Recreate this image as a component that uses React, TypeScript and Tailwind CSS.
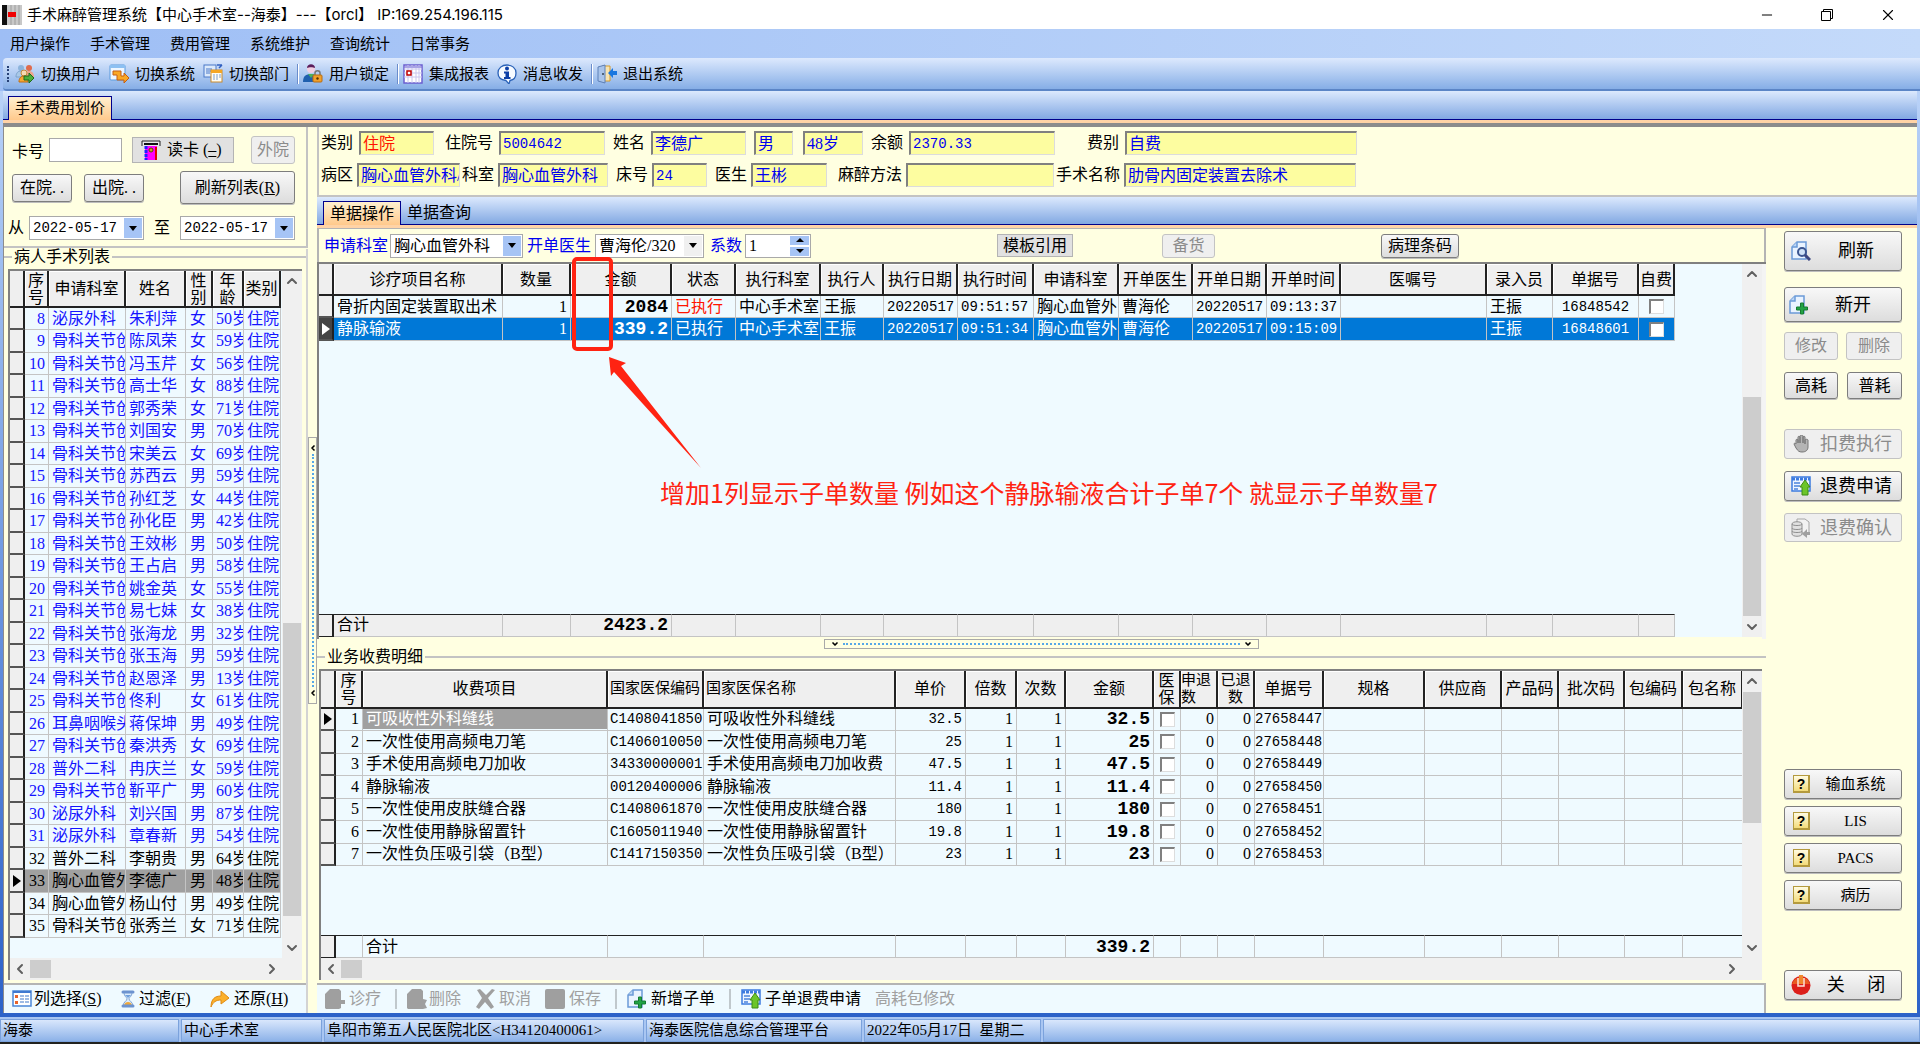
import type { ReactNode } from "react"
import clsx from "clsx"
import { ChevronDown, ChevronLeft, ChevronRight, ChevronUp, Minus, X } from "lucide-react"

const MONO = "font-['Liberation_Mono',monospace] text-[14px]"
const AMOUNT = "text-right font-['Liberation_Mono',monospace] text-[18px] font-bold"

/* ---------- icons ---------- */

const UsersIcon = () => (
  <svg className="h-5 w-5 shrink-0" viewBox="0 0 20 20">
    <circle cx="6" cy="4" r="3" fill="#8db4dc" />
    <path d="M1 13c0-4 2-6 5-6s5 2 5 6z" fill="#a9c9e8" stroke="#7da3cc" />
    <circle cx="14" cy="4" r="3" fill="#e06b4c" />
    <path d="M9 13c0-4 2-6 5-6s5 2 5 6z" fill="#eda58c" />
    <circle cx="9" cy="9" r="3" fill="#f6d9b4" stroke="#c58a3a" />
    <path d="M4 18c0-4 2-6 5-6s4 2 4 6z" fill="#f7a733" stroke="#c06d10" />
    <path d="M9 12h5V9l5 5-5 5v-3H9z" fill="#4caf3c" stroke="#1f6b1a" />
  </svg>
)

const SystemIcon = () => (
  <svg className="h-5 w-5 shrink-0" viewBox="0 0 20 20">
    <rect x="1" y="1" width="15" height="15" rx="1" fill="#eef6ff" stroke="#5a9bdc" />
    <rect x="1" y="1" width="15" height="3" fill="#8cc0f2" />
    <path d="M4 7h8v5h3v-3l5 5-5 5v-3H8v-5H4z" fill="#f9a825" stroke="#c55f12" />
  </svg>
)

const DeptIcon = () => (
  <svg className="h-5 w-5 shrink-0" viewBox="0 0 20 20">
    <rect x="1" y="1" width="12" height="12" fill="#dbe9fb" stroke="#4a78c8" />
    <path d="M3 5h6M3 7h5M3 9h4" stroke="#4a78c8" />
    <path d="M14 1h5M16 4l3-3" stroke="#2f5fc0" strokeWidth="1.5" />
    <rect x="8" y="6" width="11" height="12" fill="#fffdf4" stroke="#c98a2c" />
    <rect x="8" y="6" width="11" height="3" fill="#f5a623" />
    <path d="M10 11h2M13 11h2M16 11h2M10 13h2M13 13h2M16 13h2M10 15h2M13 15h2" stroke="#7f9fcc" />
  </svg>
)

const LockUserIcon = () => (
  <svg className="h-5 w-5 shrink-0" viewBox="0 0 20 20">
    <circle cx="8" cy="5" r="4" fill="#f1cfe2" />
    <path d="M4 4c0-5 8-5 8 0-2-1-6-1-8 0z" fill="#5a1d5c" />
    <path d="M0 18c0-6 3-8 8-8s6 2 6 8z" fill="#1f5fae" />
    <path d="M5 10l3 4 3-4z" fill="#4cb05a" />
    <path d="M12 12V9c0-3 5-3 5 0v3" fill="none" stroke="#777" strokeWidth="1.5" />
    <rect x="10" y="11" width="9" height="7" rx="1" fill="#f0a02c" stroke="#b86d10" />
    <circle cx="14.500" cy="14.500" r="1.200" fill="#5a3300" />
  </svg>
)

const ReportIcon = () => (
  <svg className="h-5 w-5 shrink-0" viewBox="0 0 20 20">
    <rect x="1" y="1" width="18" height="18" fill="#fff" stroke="#6b5fd0" strokeWidth="1.500" />
    <path d="M1 5h18M1 9h18M1 13h18M5 1v18M9 1v18M13 1v18M16 1v18" stroke="#c9c6ee" />
    <path d="M2 2h16v2H2z" fill="#a9a4e6" />
    <rect x="4" y="7" width="4" height="4" fill="#fff" stroke="#c00000" strokeWidth="1.500" />
  </svg>
)

const InfoIcon = () => (
  <svg className="h-5 w-5 shrink-0" viewBox="0 0 20 20">
    <path d="M10 1c5 0 9 3 9 8s-3 7-6 7.500L12 20l-3-3.500C5 16 1 14 1 9s4-8 9-8z" fill="#f6faff" stroke="#2a62b8" strokeWidth="1.300" />
    <circle cx="10" cy="4.500" r="2" fill="#0d3fa6" />
    <path d="M7 7.500H12v5.500H13.500v2H7v-2H8.500V9.500H7z" fill="#0d3fa6" />
  </svg>
)

const ExitIcon = () => (
  <svg className="h-5 w-5 shrink-0" viewBox="0 0 20 20">
    <path d="M5 2h8v15H5z" fill="#f7e4b2" stroke="#d39a2c" />
    <path d="M1 3l7-2v18l-7-2z" fill="#a9c4ea" stroke="#5d80b8" />
    <circle cx="6" cy="10" r="1" fill="#345" />
    <path d="M20 7h-4V4l-5 5 5 5v-3h4z" fill="#1976e0" />
  </svg>
)

const CardIcon = () => (
  <svg className="h-5 w-5 shrink-0" viewBox="0 0 20 20">
    <path d="M1 6V1h18v5" fill="#e8e8e8" stroke="#222" />
    <path d="M3 4h14" stroke="#111" strokeWidth="2" />
    <rect x="4" y="6" width="12" height="14" fill="#ff00ff" />
    <path d="M5 6v14" stroke="#2020ff" strokeWidth="3" strokeDasharray="3 1" />
    <path d="M15 7v13" stroke="#e00000" strokeWidth="2" />
    <circle cx="10" cy="10" r="2" fill="#c8a020" stroke="#5a4a00" />
  </svg>
)

const ColumnsIcon = () => (
  <svg className="h-[18px] w-5 shrink-0" viewBox="0 0 20 18">
    <rect x="1" y="1" width="18" height="15" fill="#fff" stroke="#4a86d8" strokeWidth="1.500" />
    <path d="M1 2h18" stroke="#3f79d0" strokeWidth="2" />
    <rect x="3" y="5" width="3" height="3" fill="#e8622a" />
    <rect x="3" y="11" width="3" height="3" fill="#e8622a" />
    <path d="M8 6h4M13 6h4M8 9h4M13 9h4M8 12h4M13 12h4" stroke="#7fa5dc" strokeWidth="1.500" />
  </svg>
)

const HourglassIcon = () => (
  <svg className="h-[18px] w-[14px] shrink-0" viewBox="0 0 14 18">
    <path d="M3 2C3 7 6 7 6 9s-4 3-4 7h10c0-4-4-5-4-7s3-2 3-7z" fill="#dcecfb" stroke="#7fa3d4" />
    <path d="M3 15c1-4 7-4 8 0z" fill="#f0a83a" />
    <path d="M4 5h6L7 8z" fill="#6f9fdc" />
    <path d="M2 2h10M2 16h10" stroke="#6d93cf" strokeWidth="3" strokeLinecap="round" />
  </svg>
)

const RedoIcon = () => (
  <svg className="h-[18px] w-5 shrink-0" viewBox="0 0 20 18">
    <path d="M1 17C1 9 5 6 11 6V1l8 7-8 6v-4c-5 0-8 2-10 7z" fill="#fbb02c" stroke="#e08a12" />
  </svg>
)

const PageIcon = ({ mark }: { mark: "search" | "plus" }) => (
  <svg className="h-5 w-5 shrink-0" viewBox="0 0 20 20">
    <path d="M6 1h9v17H1V6z" fill="#e9f3ff" stroke="#6b9ad8" strokeWidth="1.500" />
    <path d="M6 1v5H1" fill="#bcd6f5" stroke="#6b9ad8" strokeWidth="1.500" />
    {mark === "search" ? (
      <>
        <circle cx="11" cy="11" r="4" fill="#cfe2f7" stroke="#3b5590" strokeWidth="2" />
        <path d="M14 14l5 5" stroke="#3b4780" strokeWidth="3" />
      </>
    ) : (
      <path d="M11.500 8h3v4h4v3h-4v4h-3v-4h-4v-3h4z" fill="#22a344" stroke="#157a30" />
    )}
  </svg>
)

const RefundIcon = () => (
  <svg className="h-5 w-5 shrink-0" viewBox="0 0 20 20">
    <rect x="1" y="1" width="18" height="14" fill="#eef5ff" stroke="#3c7be0" strokeWidth="1.500" />
    <path d="M1 3h18" stroke="#3c7be0" strokeWidth="3" strokeDasharray="3 1" />
    <path d="M3 7h6M3 10h6M3 13h4" stroke="#4b83dc" strokeWidth="1.500" />
    <path d="M14 4l5 7h-2v8h-6v-8H9z" fill="#6cc52a" stroke="#3d8c14" />
  </svg>
)

const HandIcon = () => (
  <svg className="h-[18px] w-[18px] shrink-0" viewBox="0 0 18 18">
    <path d="M3 9V5c0-1 2-1 2 0v3V2c0-1 2-1 2 0v6V1c0-1 3-1 3 0v7V2c0-1 2-1 2 0v7V5c0-1 3-1 3 0v7c0 3-2 5-6 5-3 0-4-1-6-4L1 9c0-1 1-1 2 0z" fill="#b4b4b4" stroke="#777" />
  </svg>
)

const ConfirmIcon = () => (
  <svg className="h-5 w-5 shrink-0" viewBox="0 0 20 20">
    <path d="M6 1h8l4 3v11H6z" fill="#f2f2f2" stroke="#a5a5a5" />
    <path d="M1 6c0-3 10-3 10 0v10c0 3-10 3-10 0z" fill="#e0e0e0" stroke="#8f8f8f" />
    <path d="M1 6c0 2 10 2 10 0M1 10c0 2 10 2 10 0M1 13c0 2 10 2 10 0" fill="none" stroke="#8f8f8f" />
    <path d="M19 14h-3v-3l-5 5 5 4v-3h3z" fill="#a0a0a0" />
  </svg>
)

const HelpIcon = () => (
  <span className="flex h-[18px] w-[17px] shrink-0 items-center justify-center border border-r-2 border-b-2 border-[#b49a3e] bg-linear-to-b from-[#fffbe0] to-[#f3dc7a] font-['Liberation_Sans',sans-serif] text-[14px] leading-none font-bold text-black">
    ?
  </span>
)

const PowerIcon = () => (
  <svg className="h-5 w-5 shrink-0" viewBox="0 0 20 20">
    <circle cx="10" cy="10.500" r="9.500" fill="#dc1f1a" />
    <path d="M1 9a9.500 9.500 0 0 1 18 0z" fill="#e95a22" />
    <path d="M7 3v8h6V3" fill="none" stroke="#fbe3d8" strokeWidth="1.500" />
    <path d="M8 0h4v9H8z" fill="#f0862c" />
  </svg>
)

const GrayPage = ({ kind }: { kind: "plus" | "x" | "cross" | "save" }) => (
  <svg className="h-5 w-5 shrink-0" viewBox="0 0 20 20" fill="#9f9f9f">
    {kind === "save" && <rect width="20" height="20" rx="2" />}
    {kind === "cross" && <path d="M2 1l3-1 6 6 6-6 3 1-7 8 6 9-3 2-6-7-6 7-3-2 6-9z" />}
    {kind === "plus" && <path d="M5 0h9l2 2v9h4v4h-4v4l-2 1H1l-1-1V5z" />}
    {kind === "x" && <path d="M5 0h9l2 2v8l4 1-2 4 2 4-4 1H1l-1-1V5z" />}
  </svg>
)

/* ---------- small controls ---------- */

interface ButtonProps {
  children: ReactNode
  icon?: ReactNode
  className?: string
  disabled?: boolean
}

const Button = ({ children, icon, className, disabled }: ButtonProps) => (
  <button
    type="button"
    disabled={disabled}
    className={clsx(
      "flex shrink-0 items-center rounded-[3px] border leading-none whitespace-nowrap",
      disabled
        ? "border-[#c3c3c3] bg-[#efefef] text-[#8b8b8b]"
        : "border-[#7d7d7d] bg-linear-to-b from-[#f8f8f8] to-[#dddddd] text-black shadow-[0_1px_0_#bdbdbd]",
      className
    )}
  >
    {icon}
    <span className="flex-1 text-center">{children}</span>
  </button>
)

interface FieldProps {
  label?: string
  name: string
  value: string
  className: string
  gap?: string
  red?: boolean
  mono?: boolean
}

const Field = ({ label, name, value, className, gap, red, mono }: FieldProps) => (
  <label className={clsx("flex shrink-0 items-center whitespace-nowrap", gap)}>
    {label}
    <input
      readOnly
      aria-label={label ?? name}
      value={value}
      className={clsx(
        "h-6 border-t-2 border-r border-b border-l-2 border-t-[#808080] border-r-[#dcdcdc] border-b-[#dcdcdc] border-l-[#808080] bg-[#fdfda0] pl-0.5 outline-none",
        red ? "text-[#ff1400]" : "text-[#0000f0]",
        mono && MONO,
        className
      )}
    />
  </label>
)

interface ComboProps {
  name: string
  value: string
  className: string
  plain?: boolean
  mono?: boolean
}

const Combo = ({ name, value, className, plain, mono }: ComboProps) => (
  <span className={clsx("flex h-6 shrink-0 border border-[#a9a9a9] bg-white p-px", className)}>
    <select
      aria-label={name}
      className={clsx("min-w-0 flex-1 appearance-none bg-white pl-0.5 leading-none text-black outline-none", mono && MONO)}
    >
      <option>{value}</option>
    </select>
    <span
      className={clsx(
        "pointer-events-none flex w-[18px] shrink-0 items-center justify-center",
        plain ? "bg-[#f0f0f0]" : "bg-[#a6c4f5]"
      )}
    >
      <span className="border-x-4 border-t-5 border-x-transparent border-t-black" />
    </span>
  </span>
)

const VScroll = ({ before, thumb, after }: { before: number; thumb: number; after: number }) => (
  <div className="flex w-5 shrink-0 flex-col items-center bg-[#f0f0f0] text-[#606060]">
    <ChevronUp className="h-5 w-4 shrink-0" strokeWidth={3} />
    <div style={{ flexGrow: before }} />
    <div className="w-[18px] bg-[#cdcdcd]" style={{ flexGrow: thumb }} />
    <div style={{ flexGrow: after }} />
    <ChevronDown className="h-5 w-4 shrink-0" strokeWidth={3} />
  </div>
)

const HScroll = () => (
  <div className="flex h-[22px] shrink-0 items-center bg-[#f0f0f0] pr-5 text-[#606060]">
    <ChevronLeft className="h-4 w-5" strokeWidth={3} />
    <div className="h-[18px] w-[21px] bg-[#cdcdcd]" />
    <div className="flex-1" />
    <ChevronRight className="h-4 w-5" strokeWidth={3} />
  </div>
)

const GroupTitle = ({ children }: { children: ReactNode }) => (
  <div className="flex h-4 shrink-0 items-center leading-none">
    <span className="w-2 border-t-2 border-[#c3c3c3]" />
    <h2 className="px-0.5">{children}</h2>
    <span className="flex-1 border-t-2 border-[#c3c3c3]" />
  </div>
)

const TabStrip = ({ tabs, className }: { tabs: string[]; className?: string }) => (
  <>
    <div
      role="tablist"
      className={clsx(
        "flex shrink-0 items-end border-b border-[#00008b] bg-linear-to-b from-[#dce9fd] to-[#82a8e2] leading-none",
        className
      )}
    >
      {tabs.map((tab, i) => (
        <button
          key={tab}
          type="button"
          role="tab"
          aria-selected={i === 0}
          className={clsx(
            "-mb-px h-6 px-1.5",
            i === 0 && "border border-b-0 border-[#00008b] bg-linear-to-b from-[#fff0cf] to-[#ffc98c]"
          )}
        >
          {tab}
        </button>
      ))}
    </div>
    <div className="h-[3px] shrink-0 bg-[#ffd3a6]" />
  </>
)

/* ---------- data grid ---------- */

interface Column {
  title: string
  width: string
  cell?: string
  head?: string
}

interface GridProps {
  columns: Column[]
  rows: ReactNode[][]
  rowClass?: (index: number) => string
  current: number
  headHeight: string
  inverted?: boolean
  footer?: Record<number, ReactNode>
  footerClass?: string
}

const Grid = ({ columns, rows, rowClass, current, headHeight, inverted, footer, footerClass }: GridProps) => (
  <div className="flex min-w-0 flex-1 flex-col justify-between overflow-hidden bg-[#effaff]">
    <table className="w-px table-fixed border-separate border-spacing-0 leading-[17px] whitespace-nowrap">
      <thead>
        <tr className={headHeight}>
          <th className="w-[15px] border-r-2 border-b-2 border-[#222] bg-[#efefef]" aria-label="当前行" />
          {columns.map((c) => (
            <th
              key={c.title}
              className={clsx(
                "overflow-hidden border-r-2 border-b-2 border-[#222] bg-[#efefef] p-0 font-normal shadow-[inset_1px_1px_0_#fff]",
                c.width,
                c.head
              )}
            >
              {c.title}
            </th>
          ))}
        </tr>
      </thead>
      <tbody>
        {rows.map((row, r) => (
          <tr key={r} className={clsx("h-[22px] even:h-[23px]", rowClass?.(r))}>
            <td
              className={clsx(
                "border-r-2 border-b-2 border-r-[#222] border-b-[#555] p-0",
                inverted && r === current ? "bg-[#444]" : "bg-[#efefef]"
              )}
            >
              {r === current && (
                <span
                  className={clsx(
                    "mx-auto block w-2 border-y-6 border-l-8 border-y-transparent",
                    inverted ? "border-l-white" : "border-l-black"
                  )}
                />
              )}
            </td>
            {row.map((cell, i) => (
              <td
                key={i}
                className={clsx("overflow-hidden border-r border-b border-[#c4c4c4] px-[3px] py-0 leading-5", columns[i].cell)}
              >
                {cell}
              </td>
            ))}
          </tr>
        ))}
      </tbody>
    </table>
    {footer && (
      <table className="w-px table-fixed border-separate border-spacing-0 leading-5 whitespace-nowrap">
        <tbody>
          <tr className="h-[23px]">
            <td className="w-[15px] border-t border-r-2 border-b border-[#222] bg-[#efefef]" />
            {columns.map((c, i) => (
              <td
                key={c.title}
                className={clsx(
                  "overflow-hidden border-t border-r border-b border-t-[#222] border-r-[#c4c4c4] border-b-[#c4c4c4] px-[3px] py-0",
                  c.width,
                  c.cell,
                  footerClass
                )}
              >
                {footer[i]}
              </td>
            ))}
          </tr>
        </tbody>
      </table>
    )}
  </div>
)

const Check = ({ label }: { label: string }) => (
  <input
    type="checkbox"
    aria-label={label}
    className="mx-auto block h-[15px] w-[15px] appearance-none border-t-2 border-r border-b border-l-2 border-t-[#808080] border-r-[#ddd] border-b-[#ddd] border-l-[#808080] bg-white"
  />
)

/* ---------- data ---------- */

const MENU = ["用户操作", "手术管理", "费用管理", "系统维护", "查询统计", "日常事务"]

const PATIENTS = [
  "泌尿外科,朱利萍,女,50", "骨科关节创,陈凤荣,女,59", "骨科关节创,冯玉芹,女,56", "骨科关节创,高士华,女,88",
  "骨科关节创,郭秀荣,女,71", "骨科关节创,刘国安,男,70", "骨科关节创,宋美云,女,69", "骨科关节创,苏西云,男,59",
  "骨科关节创,孙红芝,女,44", "骨科关节创,孙化臣,男,42", "骨科关节创,王效彬,男,50", "骨科关节创,王占启,男,58",
  "骨科关节创,姚金英,女,55", "骨科关节创,易七妹,女,38", "骨科关节创,张海龙,男,32", "骨科关节创,张玉海,男,59",
  "骨科关节创,赵恩泽,男,13", "骨科关节创,佟利,女,61", "耳鼻咽喉头,蒋保坤,男,49", "骨科关节创,秦洪秀,女,69",
  "普外二科,冉庆兰,女,59", "骨科关节创,靳平广,男,60", "泌尿外科,刘兴国,男,87", "泌尿外科,章春新,男,54",
  "普外二科,李朝贵,男,64", "胸心血管外,李德广,男,48", "胸心血管外,杨山付,男,49", "骨科关节创,张秀兰,女,71",
].map((line, i) => {
  const [dept, name, sex, age] = line.split(",")
  return [i + 8, dept, name, sex, age + "岁", "住院"]
})

const PATIENT_COLUMNS: Column[] = [
  { title: "序号", width: "w-6", cell: "text-right", head: "whitespace-normal px-0.5" },
  { title: "申请科室", width: "w-[77px]" },
  { title: "姓名", width: "w-[60px]" },
  { title: "性别", width: "w-[27px]", cell: "pl-1", head: "whitespace-normal px-1" },
  { title: "年龄", width: "w-[31px]", head: "whitespace-normal px-1" },
  { title: "类别", width: "w-[37px]" },
]

const ORDER_COLUMNS: Column[] = [
  { title: "诊疗项目名称", width: "w-[169px]" },
  { title: "数量", width: "w-[68px]", cell: "text-right" },
  { title: "金额", width: "w-[101px]", cell: AMOUNT },
  { title: "状态", width: "w-16" },
  { title: "执行科室", width: "w-[85px]" },
  { title: "执行人", width: "w-[63px]" },
  { title: "执行日期", width: "w-[74px]", cell: MONO },
  { title: "执行时间", width: "w-[76px]", cell: MONO },
  { title: "申请科室", width: "w-[85px]" },
  { title: "开单医生", width: "w-[74px]" },
  { title: "开单日期", width: "w-[74px]", cell: MONO },
  { title: "开单时间", width: "w-[74px]", cell: MONO },
  { title: "医嘱号", width: "w-[146px]" },
  { title: "录入员", width: "w-[66px]" },
  { title: "单据号", width: "w-[86px]", cell: clsx(MONO, "text-center") },
  { title: "自费", width: "w-9" },
]

const ORDERS: ReactNode[][] = [
  ["骨折内固定装置取出术", 1, "2084", <span className="text-[#ff1400]">已执行</span>, "中心手术室", "王振", "20220517", "09:51:57", "胸心血管外", "曹海伦", "20220517", "09:13:37", "", "王振", "16848542", <Check label="自费" />],
  ["静脉输液", 1, "339.2", "已执行", "中心手术室", "王振", "20220517", "09:51:34", "胸心血管外", "曹海伦", "20220517", "09:15:09", "", "王振", "16848601", <Check label="自费" />],
]

const CHARGE_COLUMNS: Column[] = [
  { title: "序号", width: "w-[27px]", cell: "text-right", head: "whitespace-normal px-1" },
  { title: "收费项目", width: "w-[245px]" },
  { title: "国家医保编码", width: "w-24", cell: MONO, head: "text-[15px]" },
  { title: "国家医保名称", width: "w-48", head: "pl-0.5 text-left text-[15px]" },
  { title: "单价", width: "w-[70px]", cell: clsx(MONO, "text-right") },
  { title: "倍数", width: "w-[51px]", cell: "text-right" },
  { title: "次数", width: "w-[49px]", cell: "text-right" },
  { title: "金额", width: "w-[88px]", cell: AMOUNT },
  { title: "医保", width: "w-[27px]", head: "whitespace-normal px-1" },
  { title: "申退数", width: "w-[37px]", cell: "text-right", head: "whitespace-normal text-left text-[15px]" },
  { title: "已退数", width: "w-[37px]", cell: "text-right", head: "whitespace-normal text-[15px]" },
  { title: "单据号", width: "w-[69px]", cell: MONO },
  { title: "规格", width: "w-[101px]" },
  { title: "供应商", width: "w-[77px]" },
  { title: "产品码", width: "w-[57px]" },
  { title: "批次码", width: "w-[66px]" },
  { title: "包编码", width: "w-[58px]" },
  { title: "包名称", width: "w-[60px]" },
]

const CHARGES: ReactNode[][] = [
  ["可吸收性外科缝线", "C1408041850", "可吸收性外科缝线", "32.5"],
  ["一次性使用高频电刀笔", "C1406010050", "一次性使用高频电刀笔", "25"],
  ["手术使用高频电刀加收", "34330000001", "手术使用高频电刀加收费", "47.5"],
  ["静脉输液", "00120400006", "静脉输液", "11.4"],
  ["一次性使用皮肤缝合器", "C1408061870", "一次性使用皮肤缝合器", "180"],
  ["一次性使用静脉留置针", "C1605011940", "一次性使用静脉留置针", "19.8"],
  ["一次性负压吸引袋（B型）", "C1417150350", "一次性负压吸引袋（B型）", "23"],
].map(([item, code, name, price], i) => [
  i + 1,
  i === 0 ? <span className="-mx-[3px] block bg-[#a0a0a0] px-[3px] text-white">{item}</span> : item,
  <span className="-mx-px block">{code}</span>,
  name, price, 1, 1, price, <Check label="医保" />, 0, 0,
  <span className="-mx-[3px] block">{27658447 + i}</span>,
  "", "", "", "", "", "",
])

/* ---------- sections ---------- */

const Header = () => (
  <header className="shrink-0 font-['Inter','Noto_Sans_CJK_SC',sans-serif] text-[15px] leading-none">
    <div className="flex h-[29px] items-center bg-white px-0.5">
      <svg className="mr-[5px] h-5 w-5 shrink-0" viewBox="0 0 20 20">
        <rect width="20" height="20" fill="#c8c8c8" />
        <rect width="5" height="20" fill="#111" />
        <path d="M9 0v20M13 0v20M17 0v20" stroke="#9c9c9c" />
        <path d="M6 7h8v5H6z" fill="#f00000" />
      </svg>
      <h1 className="flex-1 whitespace-nowrap">手术麻醉管理系统【中心手术室--海泰】---【orcl】 IP:169.254.196.115</h1>
      <div className="flex gap-[45px] pr-[21px]">
        <button type="button" aria-label="最小化"><Minus className="h-4 w-4" strokeWidth={1.5} /></button>
        <button type="button" aria-label="还原">
          <svg className="h-[14px] w-[14px]" viewBox="0 0 14 14" fill="none" stroke="#000">
            <path d="M1.500 3.500h9v9h-9zM3.500 3.500v-2h9v9h-2" />
          </svg>
        </button>
        <button type="button" aria-label="关闭窗口"><X className="h-[18px] w-[18px]" strokeWidth={1.5} /></button>
      </div>
    </div>
    <nav className="flex h-[29px] items-center gap-5 bg-linear-to-r from-[#9ebef5] to-[#c4dafa] px-2.5">
      {MENU.map((item) => (
        <button key={item} type="button">{item}</button>
      ))}
    </nav>
    <div className="bg-linear-to-r from-[#9ebef5] to-[#c4dafa] pl-[3px]">
      <div className="flex h-[33px] items-center rounded-l border-b-2 border-[#5b85c6] bg-linear-to-b from-[#dde9fd] to-[#86aee6] pl-1 whitespace-nowrap">
        <span className="mr-1.5 h-4 border-l-2 border-dotted border-[#274176]" />
        <ToolItem icon={<UsersIcon />}>切换用户</ToolItem>
        <ToolItem icon={<SystemIcon />}>切换系统</ToolItem>
        <ToolItem icon={<DeptIcon />}>切换部门</ToolItem>
        <Divider />
        <ToolItem icon={<LockUserIcon />}>用户锁定</ToolItem>
        <Divider />
        <ToolItem icon={<ReportIcon />}>集成报表</ToolItem>
        <ToolItem icon={<InfoIcon />}>消息收发</ToolItem>
        <Divider />
        <ToolItem icon={<ExitIcon />}>退出系统</ToolItem>
      </div>
    </div>
  </header>
)

const ToolItem = ({ icon, children }: { icon: ReactNode; children: ReactNode }) => (
  <button type="button" className="mr-2 flex items-center gap-1.5">
    {icon}
    {children}
  </button>
)

const Divider = () => <span className="mr-1 h-5 border-r border-l border-l-[#6a8ccb] border-r-white" />

const PatientPanel = () => (
  <aside className="flex w-[304px] shrink-0 flex-col bg-[#ffffe1]">
    <div className="shrink-0 border-r-2 border-b-2 border-[#c3c3c3] pt-2 pr-[11px] pb-1.5">
      <div className="flex h-[30px] items-center pl-2">
        <label htmlFor="card" className="w-[37px] pt-1">卡号</label>
        <input id="card" className="h-6 w-[73px] border border-[#a9a9a9] bg-white px-1 outline-none" />
        <button type="button" className="ml-2.5 flex h-[26px] w-[102px] items-center gap-1.5 border border-[#b4b4b4] bg-[#e1e1e1] pl-2 leading-none">
          <CardIcon />
          <span>读卡 (<u>–</u>)</span>
        </button>
        <Button disabled className="ml-auto h-7 w-11">外院</Button>
      </div>
      <div className="mt-1.5 flex h-[33px] items-center pl-2">
        <Button className="h-7 w-[60px]">在院. .</Button>
        <Button className="ml-3 h-7 w-[60px]">出院. .</Button>
        <Button className="ml-auto h-[33px] w-[115px]">刷新列表(<u>R</u>)</Button>
      </div>
      <div className="mt-3 flex h-6 items-center pl-1">
        <span className="w-[21px]">从</span>
        <Combo name="从" value="2022-05-17" className="w-[115px]" mono />
        <span className="ml-2.5">至</span>
        <Combo name="至" value="2022-05-17" className="ml-auto w-[115px]" mono />
      </div>
    </div>
    <section className="mt-px flex flex-1 flex-col border-r-2 border-[#d3d3d3]">
      <GroupTitle>病人手术列表</GroupTitle>
      <div className="mt-1 mr-1 ml-1 flex flex-1 flex-col border-t-2 border-l-2 border-[#808080]">
        <div className="flex flex-1">
          <Grid
            columns={PATIENT_COLUMNS}
            rows={PATIENTS}
            current={25}
            headHeight="h-[37px]"
            rowClass={(i) => (i < 24 ? "text-[#1414ff]" : i === 25 ? "bg-[#a0a0a0]" : "")}
          />
          <VScroll before={329} thumb={291} after={22} />
        </div>
        <HScroll />
      </div>
      <div className="mt-[3px] flex h-[30px] shrink-0 items-center border-t-2 border-[#b4b4b4] bg-[#effaff] pl-2 leading-none">
        <button type="button" className="flex w-[109px] items-center gap-0.5"><ColumnsIcon /><span>列选择(<u>S</u>)</span></button>
        <button type="button" className="flex w-[89px] items-center gap-1"><HourglassIcon /><span>过滤(<u>F</u>)</span></button>
        <button type="button" className="flex items-center gap-1"><RedoIcon /><span>还原(<u>H</u>)</span></button>
      </div>
    </section>
  </aside>
)

const PatientInfo = () => (
  <section className="flex h-[70px] shrink-0 flex-col gap-2 border-b-2 border-l-2 border-[#c3c3c3] pt-1 pl-0.5">
    <div className="flex items-center">
      <Field name="类别" label="类别" value="住院" gap="gap-1.5" className="w-[75px]" red />
      <Field name="住院号" label="住院号" value="5004642" gap="ml-[11px] gap-1.5" className="w-[106px]" mono />
      <Field name="姓名" label="姓名" value="李德广" gap="ml-2 gap-1.5" className="w-[95px]" />
      <Field name="性别" value="男" gap="ml-2" className="w-[39px]" />
      <Field name="年龄" value="48岁" gap="ml-2.5" className="w-[60px]" />
      <Field name="余额" label="余额" value="2370.33" gap="ml-2 gap-1.5" className="w-[146px]" mono />
      <Field name="费别" label="费别" value="自费" gap="ml-8 gap-1.5" className="w-[232px]" />
    </div>
    <div className="flex items-center">
      <Field name="病区" label="病区" value="胸心血管外科/" gap="gap-1" className="w-[103px]" />
      <Field name="科室" label="科室" value="胸心血管外科" gap="ml-0.5 gap-1" className="w-[110px]" />
      <Field name="床号" label="床号" value="24" gap="ml-2 gap-1" className="w-[55px]" mono />
      <Field name="医生" label="医生" value="王彬" gap="ml-2 gap-1" className="w-[76px]" />
      <Field name="麻醉方法" label="麻醉方法" value="" gap="ml-[11px] gap-1" className="w-[148px]" />
      <Field name="手术名称" label="手术名称" value="肋骨内固定装置去除术" gap="ml-0.5 gap-1" className="w-[232px]" />
    </div>
  </section>
)

const OrderBar = () => (
  <div className="flex h-[34px] shrink-0 items-center border-t border-r-2 border-l-2 border-[#b4b4b4] pl-[5px] text-[#0000f0]">
    <label>申请科室</label>
    <Combo name="申请科室" value="胸心血管外科" className="ml-0.5 w-[133px]" />
    <label className="ml-1">开单医生</label>
    <Combo name="开单医生" value="曹海伦/320" plain className="ml-1 w-[109px]" />
    <label htmlFor="ratio" className="ml-1.5">系数</label>
    <span className="ml-[3px] flex h-6 w-[66px] border border-[#a9a9a9] bg-white p-px">
      <input id="ratio" defaultValue="1" className="min-w-0 flex-1 pl-0.5 text-black outline-none" />
      <span className="flex w-[19px] flex-col gap-0.5">
        <button type="button" aria-label="增加" className="flex flex-1 items-center justify-center bg-[#a6c4f5]">
          <span className="border-x-4 border-b-4 border-x-transparent border-b-black" />
        </button>
        <button type="button" aria-label="减少" className="flex flex-1 items-center justify-center bg-[#a6c4f5]">
          <span className="border-x-4 border-t-4 border-x-transparent border-t-black" />
        </button>
      </span>
    </span>
    <button type="button" className="ml-[186px] h-[23px] w-[76px] border border-[#b4b4b4] bg-[#e1e1e1] leading-none text-black">模板引用</button>
    <Button disabled className="ml-[89px] h-6 w-[53px]">备货</Button>
    <Button className="ml-[166px] h-6 w-[78px]">病理条码</Button>
  </div>
)

/* red mark-up drawn over the order grid */
const Markup = () => (
  <>
    <div className="pointer-events-none absolute -top-[7px] left-[253px] h-[94px] w-[41px] rounded-[5px] border-4 border-[#ff2312]" />
    <svg className="pointer-events-none absolute top-[92px] left-[289px] h-[113px] w-[94px]" viewBox="0 0 94 113">
      <path d="M1 1l17 6-5 3 80 102L6 16l-3 4z" fill="#ff2312" />
    </svg>
    <p className="pointer-events-none absolute top-[210px] left-[341px] font-['Noto_Sans_CJK_SC',sans-serif] text-[25px] leading-9 whitespace-nowrap text-[#ff2312]">
      增加1列显示子单数量 例如这个静脉输液合计子单7个 就显示子单数量7
    </p>
  </>
)

const OrderGrid = () => (
  <section className="relative flex flex-1 basis-0 border-t-2 border-l-2 border-[#808080]">
    <div className="flex min-w-0 flex-1 pb-0.5">
      <Grid
        columns={ORDER_COLUMNS}
        rows={ORDERS}
        current={1}
        inverted
        headHeight="h-8"
        rowClass={(i) => (i === 1 ? "bg-[#0078d7] text-white" : "")}
        footer={{ 0: "合计", 2: "2423.2" }}
        footerClass="bg-[#efefef]"
      />
      <VScroll before={114} thumb={220} after={1} />
    </div>
    <span className="w-1 shrink-0 bg-[#f4f4f4]" />
    <Markup />
  </section>
)

const BarSeparator = () => <span className="mr-2.5 h-5 border-l-2 border-[#c0c8cc]" />

const ChargeSection = () => (
  <section className="flex flex-1 basis-0 flex-col">
    <div className="mx-auto flex h-2.5 w-[435px] shrink-0 items-center justify-between border border-[#a9a9a9] px-1 text-black">
      <ChevronDown className="h-2 w-3" strokeWidth={5} />
      <span className="mx-0.5 flex-1 border-t-2 border-dotted border-[#55a7e8]" />
      <ChevronDown className="h-2 w-3" strokeWidth={5} />
    </div>
    <GroupTitle>业务收费明细</GroupTitle>
    <div className="mt-1 mr-1 ml-0.5 flex flex-1 flex-col border-t-2 border-l-2 border-[#808080]">
      <div className="flex flex-1">
        <Grid
          columns={CHARGE_COLUMNS}
          rows={CHARGES}
          current={0}
          headHeight="h-[38px]"
          footer={{ 1: "合计", 7: "339.2" }}
        />
        <VScroll before={1} thumb={132} after={116} />
      </div>
      <HScroll />
    </div>
    <div className="mt-[3px] flex h-[30px] shrink-0 items-center border-t-2 border-r-2 border-[#b4b4b4] bg-[#effaff] pl-2 leading-none">
      <button type="button" disabled className="mr-3.5 flex items-center gap-1 text-[#a0a0a0]"><GrayPage kind="plus" />诊疗</button>
      <BarSeparator />
      <button type="button" disabled className="mr-3.5 flex items-center gap-0.5 text-[#a0a0a0]"><GrayPage kind="x" />删除</button>
      <button type="button" disabled className="mr-3.5 flex items-center gap-1 text-[#a0a0a0]"><GrayPage kind="cross" />取消</button>
      <button type="button" disabled className="mr-3.5 flex items-center gap-1 text-[#a0a0a0]"><GrayPage kind="save" />保存</button>
      <BarSeparator />
      <button type="button" className="mr-3.5 flex items-center gap-1"><PageIcon mark="plus" />新增子单</button>
      <BarSeparator />
      <button type="button" className="mr-3.5 flex items-center gap-1"><RefundIcon />子单退费申请</button>
      <button type="button" disabled className="text-[#a0a0a0]">高耗包修改</button>
    </div>
  </section>
)

const Sidebar = () => (
  <aside className="flex w-[151px] shrink-0 flex-col pt-[3px] pr-[15px] pb-[13px] pl-[18px] text-[18px]">
    <Button icon={<PageIcon mark="search" />} className="h-10 pl-1.5">刷新</Button>
    <Button icon={<PageIcon mark="plus" />} className="mt-4 h-[35px] px-1">新开</Button>
    <div className="mt-2.5 flex justify-between text-base">
      <Button disabled className="h-7 w-[54px]">修改</Button>
      <Button disabled className="h-7 w-14">删除</Button>
    </div>
    <div className="mt-3 flex justify-between text-base">
      <Button className="h-[27px] w-[54px]">高耗</Button>
      <Button className="h-[27px] w-[55px]">普耗</Button>
    </div>
    <Button disabled icon={<HandIcon />} className="mt-[30px] h-[30px] pl-2">扣费执行</Button>
    <Button icon={<RefundIcon />} className="mt-3 h-[30px] pl-1.5">退费申请</Button>
    <Button disabled icon={<ConfirmIcon />} className="mt-3 h-[29px] pl-1.5">退费确认</Button>
    <div className="mt-auto flex flex-col gap-[7px] text-[15px]">
      <Button icon={<HelpIcon />} className="h-[30px] pl-2">输血系统</Button>
      <Button icon={<HelpIcon />} className="h-[30px] pl-2">LIS</Button>
      <Button icon={<HelpIcon />} className="h-[30px] pl-2">PACS</Button>
      <Button icon={<HelpIcon />} className="h-[30px] pl-2">病历</Button>
    </div>
    <Button icon={<PowerIcon />} className="mt-[60px] h-[30px] pl-1.5 whitespace-pre">{"关     闭"}</Button>
  </aside>
)

const STATUS = [
  { text: "海泰", width: "w-[179px]" },
  { text: "中心手术室", width: "w-[141px]" },
  { text: "阜阳市第五人民医院北区<H34120400061>", width: "w-[320px]" },
  { text: "海泰医院信息综合管理平台", width: "w-[216px]" },
  { text: "2022年05月17日  星期二", width: "w-[177px]" },
  { text: "", width: "flex-1" },
]

const StatusBar = () => (
  <footer className="flex h-[27px] shrink-0 gap-0.5 border-b-2 border-[#22221e] bg-[#a9c6f2] pt-0.5 text-[15px] leading-none">
    {STATUS.map((s) => (
      <span
        key={s.width}
        className={clsx(
          "flex items-center border border-[#7ba2dc] bg-linear-to-b from-[#d9e7fc] to-[#8db2e8] pl-0.5 whitespace-pre",
          s.width
        )}
      >
        {s.text}
      </span>
    ))}
  </footer>
)

export default function App() {
  return (
    <div className="flex min-h-screen flex-col overflow-hidden bg-[#ffffe1] font-['Liberation_Serif','Noto_Sans_CJK_SC',serif] text-base leading-6 text-black">
      <Header />
      <div className="flex flex-1 flex-col bg-linear-to-b from-[#b9d2f8] to-[#2c62c8] px-[3px] pb-1">
        <TabStrip tabs={["手术费用划价"]} className="h-[29px] pl-[5px] text-[15px]" />
        <div className="flex flex-1 border-t-4 border-l border-[#8c8c8c] bg-[#ffffe1]">
          <PatientPanel />
          <div className="flex w-[9px] shrink-0 items-center">
            <button type="button" aria-label="收起列表" className="flex h-[267px] w-[9px] flex-col items-center justify-between border border-[#a9a9a9] py-1">
              <ChevronLeft className="h-3 w-2" strokeWidth={5} />
              <span className="flex-1 border-l-2 border-dotted border-[#55a7e8]" />
              <ChevronLeft className="h-3 w-2" strokeWidth={5} />
            </button>
          </div>
          <main className="flex min-w-0 flex-1 flex-col">
            <PatientInfo />
            <TabStrip tabs={["单据操作", "单据查询"]} className="h-7 pl-1.5" />
            <div className="flex flex-1">
              <div className="flex min-w-0 flex-1 flex-col">
                <OrderBar />
                <OrderGrid />
                <ChargeSection />
              </div>
              <Sidebar />
            </div>
          </main>
        </div>
      </div>
      <StatusBar />
    </div>
  )
}
